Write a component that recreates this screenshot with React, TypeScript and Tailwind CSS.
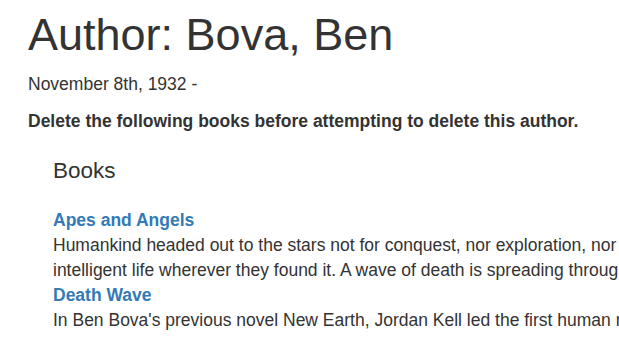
const books = [
  {
    title: 'Apes and Angels',
    lines: [
      'Humankind headed out to the stars not for conquest, nor exploration, nor even for curiosity. Humans went to the stars in a desperate crusade to save',
      'intelligent life wherever they found it. A wave of death is spreading through the Milky Way galaxy, an expanding sphere of lethal gamma radiation.',
    ],
  },
  {
    title: 'Death Wave',
    lines: [
      "In Ben Bova's previous novel New Earth, Jordan Kell led the first human mission beyond the solar system. They discovered the ruins of an ancient alien civilization.",
    ],
  },
];

const App = () => {
  return (
    <div className="w-[619px] h-[337px] overflow-hidden bg-white text-[#333333] font-['Liberation_Sans',Arial,sans-serif]">
      <div className="pl-[28px]">
        {/* Header */}
        <h1 className="text-[45px] leading-[1.1] font-normal mt-[10px] mb-[12px] whitespace-nowrap">
          Author: Bova, Ben
        </h1>
        <p className="text-[17.5px] leading-[25px] mb-[12px] whitespace-nowrap">November 8th, 1932 -</p>
        <p className="text-[17.5px] leading-[25px] font-bold whitespace-nowrap">
          Delete the following books before attempting to delete this author.
        </p>

        {/* Books */}
        <div className="ml-[25px] mt-[25px]">
          <h4 className="text-[22.5px] leading-[1.1] font-normal mb-[25px]">Books</h4>
          <dl className="text-[17.5px] leading-[25px]">
            {books.map((book) => (
              <div key={book.title}>
                <dt className="font-bold">
                  <a href="#" className="text-[#337ab7] whitespace-nowrap">
                    {book.title}
                  </a>
                </dt>
                <dd>
                  {book.lines.map((line, idx) => (
                    <span key={idx} className="block whitespace-nowrap">
                      {line}
                    </span>
                  ))}
                </dd>
              </div>
            ))}
          </dl>
        </div>
      </div>
    </div>
  );
};

export default App;
